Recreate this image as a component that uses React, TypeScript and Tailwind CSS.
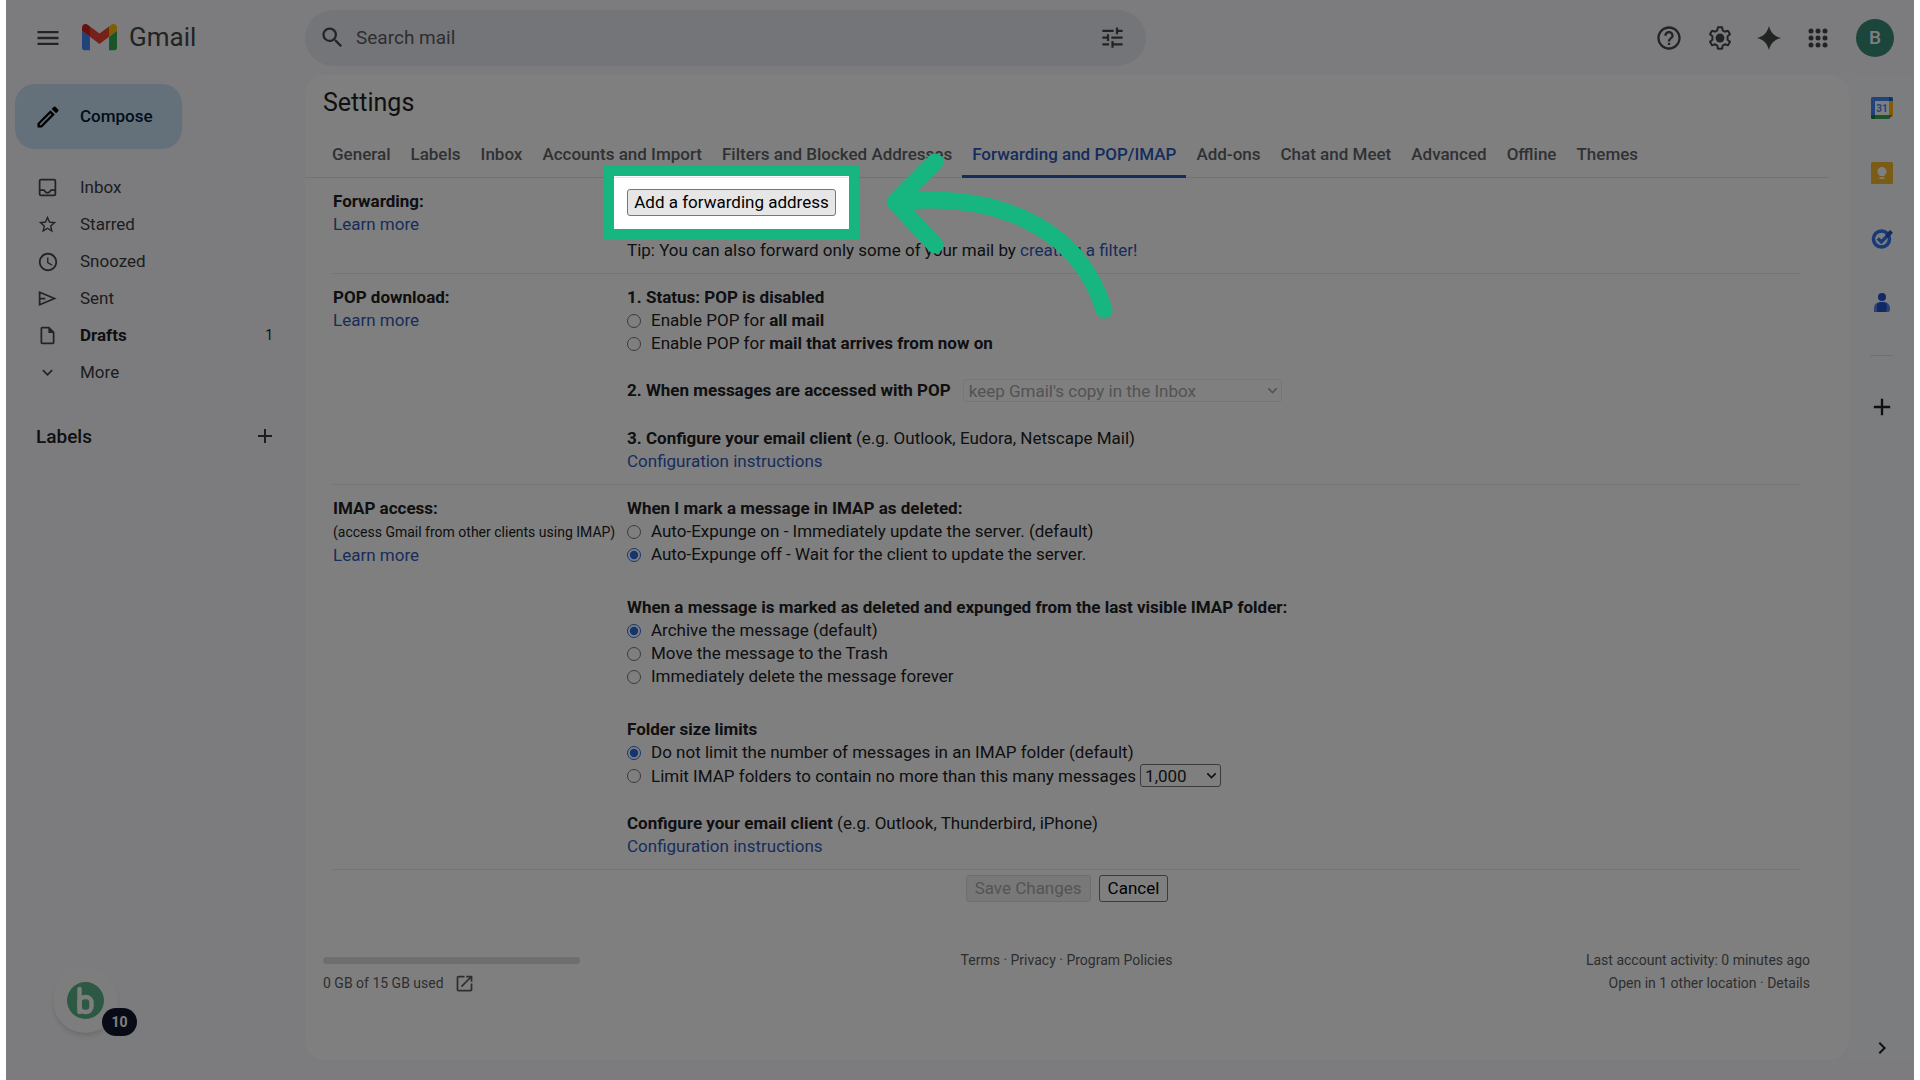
import { ReactNode, useState } from "react";
import {
    MdAccessTime, MdAdd, MdChevronRight, MdExpandMore, MdHelpOutline, MdMenu,
    MdOpenInNew, MdOutlineInsertDriveFile, MdOutlineModeEdit, MdSearch, MdStarBorder, MdTune,
} from "react-icons/md";

const tabs = [
    "General", "Labels", "Inbox", "Accounts and Import", "Filters and Blocked Addresses",
    "Forwarding and POP/IMAP", "Add-ons", "Chat and Meet", "Advanced", "Offline", "Themes",
];

const InboxIcon = () => (
    <svg viewBox="0 0 24 24" className="size-[21px]" fill="none" stroke="currentColor" strokeWidth="2">
        <rect x="3" y="3" width="18" height="18" rx="1.5" />
        <path d="M3 15h5c1 2 2.200 3 4 3s3-1 4-3h5" />
    </svg>
);

const SendIcon = () => (
    <svg viewBox="0 0 24 24" className="size-[21px]" fill="none" stroke="currentColor" strokeWidth="2">
        <path d="M3 4.800v14.400L20 12zM3 12h6.500" />
    </svg>
);

const GmailLogo = () => (
    <svg viewBox="52 42 88 66" className="w-[35px]">
        <path fill="#4285f4" d="M58 108h14V74L52 59v43c0 3.320 2.690 6 6 6" />
        <path fill="#34a853" d="M120 108h14c3.320 0 6-2.690 6-6V59l-20 15" />
        <path fill="#fbbc04" d="M120 48v26l20-15v-8c0-7.420-8.470-11.650-14.400-7.200" />
        <path fill="#ea4335" d="M72 74V48l24 18 24-18v26L96 92" />
        <path fill="#c5221f" d="M52 51v8l20 15V48l-5.600-4.200c-5.940-4.450-14.400-.22-14.400 7.200" />
    </svg>
);

const GearIcon = () => (
    <svg viewBox="0 0 24 24" className="size-[28px]" fill="none" stroke="currentColor" strokeWidth="1.700" strokeLinejoin="round">
        <path d="M10.200 2.800h3.600l.5 2.700 1.900 1.100 2.600-.9 1.800 3.100-2.100 1.800v2.800l2.100 1.800-1.800 3.100-2.600-.9-1.900 1.100-.5 2.700h-3.600l-.5-2.700-1.900-1.100-2.600.9-1.800-3.100 2.100-1.800v-2.800L3.400 8.800l1.800-3.100 2.600.9 1.900-1.100z" />
        <circle cx="12" cy="12" r="3.800" fill="currentColor" stroke="none" />
    </svg>
);

const SparkIcon = () => (
    <svg viewBox="0 0 24 24" className="size-[24px]" fill="currentColor">
        <path d="M12 0c1.800 6.500 5 10.200 12 12-7 1.800-10.200 5.500-12 12-1.800-6.500-5-10.200-12-12C7 10.200 10.200 6.500 12 0" />
    </svg>
);

const GridIcon = () => (
    <svg viewBox="0 0 20 20" className="size-[20px]" fill="currentColor">
        {[3, 10, 17].map((y) => [3, 10, 17].map((x) => <circle key={`${x}-${y}`} cx={x} cy={y} r="2.500" />))}
    </svg>
);

const CalendarIcon = () => (
    <svg viewBox="0 0 22 22" className="size-[22px]">
        <path fill="#fff" d="M4 4h14v14H4z" />
        <path fill="#4285f4" d="M1.500 0H18v4H4v14H0V1.500A1.500 1.500 0 0 1 1.500 0" />
        <path fill="#1967d2" d="M18 0h2.500A1.500 1.500 0 0 1 22 1.500V4h-4z" />
        <path fill="#fbbc04" d="M18 4h4v14h-4z" />
        <path fill="#34a853" d="M4 18h14v4H4z" />
        <path fill="#188038" d="M0 18h4v4H1.500A1.500 1.500 0 0 1 0 20.500z" />
        <path fill="#ea4335" d="M18 18h4l-4 4z" />
        <text x="11" y="14.500" textAnchor="middle" fontSize="10" fontWeight="700" fill="#4285f4">31</text>
    </svg>
);

const KeepIcon = () => (
    <svg viewBox="0 0 22 22" className="size-[22px]">
        <rect width="22" height="22" rx="1.500" fill="#f5b92c" />
        <path fill="#fff" d="M11 5a4.500 4.500 0 0 0-2.500 8.200V14h5v-.8A4.500 4.500 0 0 0 11 5M8.500 15.200h5v1.800h-5z" />
    </svg>
);

const TasksIcon = () => (
    <svg viewBox="0 0 22 22" className="size-[22px]" fill="none">
        <circle cx="10.500" cy="12" r="8" stroke="#3474ee" strokeWidth="3.500" />
        <path d="M6.800 11.300l3.500 3.500 7-7" stroke="#3474ee" strokeWidth="3.300" />
        <path d="M15.500 9.600L20.500 4.300" stroke="#2358c0" strokeWidth="4" />
    </svg>
);

const ContactsIcon = () => (
    <svg viewBox="0 0 22 22" className="size-[22px]">
        <circle cx="11" cy="5" r="4" fill="#2355cc" />
        <path fill="#5a83e8" d="M3 16a6 6 0 0 1 6-6h4a6 6 0 0 1 6 6v1.500a2.500 2.500 0 0 1-2.500 2.500H3z" />
        <path fill="#2355cc" d="M6 12.500A6 6 0 0 1 9 10h4q3 1 3 4 0 5-1.500 6H6z" />
    </svg>
);

const navItems: { name: string, icon: ReactNode, count?: number }[] = [
    { name: "Inbox", icon: <InboxIcon /> },
    { name: "Starred", icon: <MdStarBorder className="size-[21px]" /> },
    { name: "Snoozed", icon: <MdAccessTime className="size-[22px]" /> },
    { name: "Sent", icon: <SendIcon /> },
    { name: "Drafts", icon: <MdOutlineInsertDriveFile className="size-[21px]" />, count: 1 },
    { name: "More", icon: <MdExpandMore className="size-[21px]" /> },
];

const Link = ({ children }: { children: ReactNode }) => (
    <a href="#" className="text-[#3358b8]">{children}</a>
);

type RadioProps = {
    name: string,
    value: string,
    selected: string,
    onSelect: (value: string) => void,
    children: ReactNode,
}

const Radio = ({ name, value, selected, onSelect, children }: RadioProps) => (
    <label className="flex items-center gap-[10px]">
        <input
            type="radio"
            name={name}
            checked={selected === value}
            onChange={() => onSelect(value)}
            className="size-[14px] accent-[#2a6ae0]"
        />
        <span>{children}</span>
    </label>
);

const Row = ({ title, note, children }: { title: string, note?: string, children: ReactNode }) => (
    <section className="grid grid-cols-[294px_1fr] border-b border-[#e8e8e8] pt-3 pb-[11px]">
        <div>
            <h2 className="font-bold">{title}</h2>
            {note && <p className="whitespace-nowrap text-[14px] leading-6">{note}</p>}
            <Link>Learn more</Link>
        </div>
        <div>{children}</div>
    </section>
);

const Header = () => (
    <header className="flex h-[75px] items-center text-[#444746]">
        <div className="flex w-[299px] shrink-0 items-center pl-7">
            <button aria-label="Main menu"><MdMenu className="size-[28px]" /></button>
            <a href="#" className="ml-5 flex items-center gap-3">
                <GmailLogo />
                <span className="text-[26px]">Gmail</span>
            </a>
        </div>
        <form className="flex h-14 w-[841px] items-center rounded-full bg-[#e9ebf2] pr-5 pl-[14px]">
            <button type="button" aria-label="Search"><MdSearch className="size-[27px]" /></button>
            <input aria-label="Search mail" placeholder="Search mail" className="ml-[10px] flex-1 text-[19px] outline-none placeholder:text-[#5a5d5c]" />
            <button type="button" aria-label="Show search options"><MdTune className="size-[27px]" /></button>
        </form>
        <div className="ml-auto flex items-center pr-5">
            <button aria-label="Support"><MdHelpOutline className="size-[28px]" /></button>
            <button aria-label="Settings" className="ml-[23px]"><GearIcon /></button>
            <button aria-label="Gemini" className="ml-[23px]"><SparkIcon /></button>
            <button aria-label="Google apps" className="ml-[27px]"><GridIcon /></button>
            <button aria-label="Account" className="ml-[28px] size-[38px] rounded-full bg-[#388a78] text-[19px] font-medium text-white">B</button>
        </div>
    </header>
);

const Sidebar = () => (
    <aside className="relative w-[299px] shrink-0 text-[#3a3b3d]">
        <button className="mt-[9px] ml-[9px] flex h-[65px] w-[167px] items-center rounded-[20px] bg-[#c8e2f5] pl-[19px] font-medium text-[#001d35]">
            <MdOutlineModeEdit className="mr-[18px] size-[28px] text-black" />
            Compose
        </button>
        <nav className="mt-5">
            {navItems.map((item) => (
                <a key={item.name} href="#" className={item.count ? "flex h-[37px] items-center pr-[32px] pl-[31px] font-bold text-[#202124]" : "flex h-[37px] items-center pr-[32px] pl-[31px]"}>
                    <span className="flex w-[43px] items-center text-[#444746]">{item.icon}</span>
                    <span>{item.name}</span>
                    {item.count && <span className="ml-auto text-[14px] font-normal">{item.count}</span>}
                </a>
            ))}
        </nav>
        <div className="mt-[33px] flex items-center justify-between pr-7 pl-[30px]">
            <h2 className="text-[19px] font-medium text-[#202124]">Labels</h2>
            <button aria-label="Create new label"><MdAdd className="size-[24px]" /></button>
        </div>
        <div className="absolute bottom-[27px] left-[47px] flex size-[65px] items-center justify-center rounded-full bg-[#fafafa] shadow-md">
            <svg viewBox="0 0 37 37" className="size-[37px]">
                <circle cx="18.500" cy="18.500" r="18.500" fill="#58b088" />
                <path fill="none" stroke="#fafafa" strokeWidth="4.500" strokeLinecap="round" d="M12.500 7v23" />
                <rect x="12.500" y="15" width="12" height="15" rx="5.500" fill="none" stroke="#fafafa" strokeWidth="4.500" />
            </svg>
            <span className="absolute -right-[19px] -bottom-[3px] flex h-7 w-[35px] items-center justify-center rounded-full bg-[#10172a] text-[14px] font-bold text-white">10</span>
        </div>
    </aside>
);

const SidePanel = () => (
    <aside className="flex w-[65px] shrink-0 flex-col items-center bg-[#f6fafd] pt-[22px]">
        <div className="flex flex-col gap-[43px]">
            <button aria-label="Calendar"><CalendarIcon /></button>
            <button aria-label="Keep"><KeepIcon /></button>
            <button aria-label="Tasks"><TasksIcon /></button>
            <button aria-label="Contacts"><ContactsIcon /></button>
        </div>
        <hr className="mt-[41px] w-[23px] border-[#e0e3e7]" />
        <button aria-label="Get add-ons" className="mt-[37px]"><MdAdd className="size-[28px]" /></button>
        <button aria-label="Hide side panel" className="mt-auto"><MdChevronRight className="size-[24px]" /></button>
    </aside>
);

/* Dims everything around its parent and points an arrow at it */
const Spotlight = () => (
    <>
        <div className="pointer-events-none absolute -inset-[23px] z-10 border-[10px] border-[#17b681] shadow-[0_0_0_3000px_rgba(0,0,0,0.5)]" />
        <svg viewBox="0 0 240 180" className="pointer-events-none absolute -top-[46px] left-[249px] z-20 h-[180px] w-[240px]" fill="none" stroke="#17b681" strokeWidth="17" strokeLinecap="round" strokeLinejoin="round">
            <path d="M59 19L19 59l40 43M19 59c94-10 182 20 209 108" />
        </svg>
    </>
);

const Settings = () => {

    const [pop, setPop] = useState("");
    const [expunge, setExpunge] = useState("off");
    const [deleted, setDeleted] = useState("archive");
    const [limit, setLimit] = useState("none");

    return (
        <main className="min-w-0 flex-1 rounded-[20px] bg-white">
            <h1 className="px-[18px] pt-3 text-[25px] leading-8">Settings</h1>
            <div className="mr-5 flex border-b border-[#e4e4e4] pl-[17px] text-[#5f6368]">
                {tabs.map((tab) => (
                    <a key={tab} href="#" className={tab === "Forwarding and POP/IMAP"
                        ? "-mb-px border-b-3 border-[#2a58b8] px-[10px] pt-6 pb-[9px] font-medium whitespace-nowrap text-[#2a58b8]"
                        : "px-[10px] pt-6 pb-[11px] font-medium whitespace-nowrap"}>
                        {tab}
                    </a>
                ))}
            </div>
            <div className="mr-12 ml-7">
                <Row title="Forwarding:">
                    <div className="relative -mt-px w-max">
                        <button className="h-[27px] w-[209px] rounded-[3px] border border-[#767676] bg-[#e6e6e6] text-black">Add a forwarding address</button>
                        <Spotlight />
                    </div>
                    <p className="mt-[23px]">Tip: You can also forward only some of your mail by <Link>creating a filter!</Link></p>
                </Row>
                <Row title="POP download:">
                    <h3 className="font-bold">1. Status: POP is disabled</h3>
                    <Radio name="pop" value="all" selected={pop} onSelect={setPop}>Enable POP for <b>all mail</b></Radio>
                    <Radio name="pop" value="now" selected={pop} onSelect={setPop}>Enable POP for <b>mail that arrives from now on</b></Radio>
                    <div className="mt-6 flex gap-3">
                        <label htmlFor="popAction" className="font-bold">2. When messages are accessed with POP</label>
                        <span className="relative text-[#a6a6a6]">
                            <select id="popAction" disabled className="h-[23px] w-[319px] appearance-none rounded-[3px] border border-[#ededed] pl-[5px]">
                                <option>keep Gmail's copy in the Inbox</option>
                            </select>
                            <MdExpandMore className="absolute top-[2px] right-0 size-[19px]" />
                        </span>
                    </div>
                    <p className="mt-6"><b>3. Configure your email client</b> (e.g. Outlook, Eudora, Netscape Mail)</p>
                    <Link>Configuration instructions</Link>
                </Row>
                <Row title="IMAP access:" note="(access Gmail from other clients using IMAP)">
                    <h3 className="font-bold">When I mark a message in IMAP as deleted:</h3>
                    <Radio name="expunge" value="on" selected={expunge} onSelect={setExpunge}>Auto-Expunge on - Immediately update the server. (default)</Radio>
                    <Radio name="expunge" value="off" selected={expunge} onSelect={setExpunge}>Auto-Expunge off - Wait for the client to update the server.</Radio>
                    <h3 className="mt-[30px] font-bold">When a message is marked as deleted and expunged from the last visible IMAP folder:</h3>
                    <Radio name="deleted" value="archive" selected={deleted} onSelect={setDeleted}>Archive the message (default)</Radio>
                    <Radio name="deleted" value="trash" selected={deleted} onSelect={setDeleted}>Move the message to the Trash</Radio>
                    <Radio name="deleted" value="forever" selected={deleted} onSelect={setDeleted}>Immediately delete the message forever</Radio>
                    <h3 className="mt-[30px] font-bold">Folder size limits</h3>
                    <Radio name="limit" value="none" selected={limit} onSelect={setLimit}>Do not limit the number of messages in an IMAP folder (default)</Radio>
                    <div className="flex gap-1">
                        <Radio name="limit" value="some" selected={limit} onSelect={setLimit}>Limit IMAP folders to contain no more than this many messages</Radio>
                        <span className="relative">
                            <select aria-label="Message limit" className="h-[23px] w-[81px] appearance-none rounded-[3px] border border-[#767676] pl-1">
                                <option>1,000</option>
                            </select>
                            <MdExpandMore className="absolute top-[2px] right-0 size-[19px]" />
                        </span>
                    </div>
                    <p className="mt-6"><b>Configure your email client</b> (e.g. Outlook, Thunderbird, iPhone)</p>
                    <Link>Configuration instructions</Link>
                </Row>
                <div className="mt-[5px] flex justify-center gap-2">
                    <button disabled className="h-[27px] rounded-[3px] border border-[#dcdcdc] bg-[#f0f0f0] px-2 text-[#a9a9a9]">Save Changes</button>
                    <button className="h-[27px] rounded-[3px] border border-[#767676] px-2 text-black">Cancel</button>
                </div>
            </div>
            <footer className="mt-[47px] mr-[39px] ml-[18px] grid grid-cols-3 text-[14px] text-[#5a5d61]">
                <div>
                    <div className="mt-2 h-[7px] w-[257px] rounded-full bg-[#dadce0]" />
                    <p className="mt-2 flex items-center gap-[10px]">
                        0 GB of 15 GB used
                        <MdOpenInNew className="size-[21px]" />
                    </p>
                </div>
                <p className="text-center"><a href="#">Terms</a> · <a href="#">Privacy</a> · <a href="#">Program Policies</a></p>
                <div className="text-right">
                    <p>Last account activity: 0 minutes ago</p>
                    <p>Open in 1 other location · <a href="#">Details</a></p>
                </div>
            </footer>
        </main>
    );
};

const App = () => (
    <div className="bg-white px-[6px] font-['Roboto',sans-serif] text-[17px] leading-[23px] text-[#202124]">
        <div className="relative flex min-h-screen flex-col overflow-hidden bg-[#f9f9fd]">
            <Header />
            <div className="flex flex-1 pb-5">
                <Sidebar />
                <Settings />
                <SidePanel />
            </div>
        </div>
    </div>
);

export default App;
